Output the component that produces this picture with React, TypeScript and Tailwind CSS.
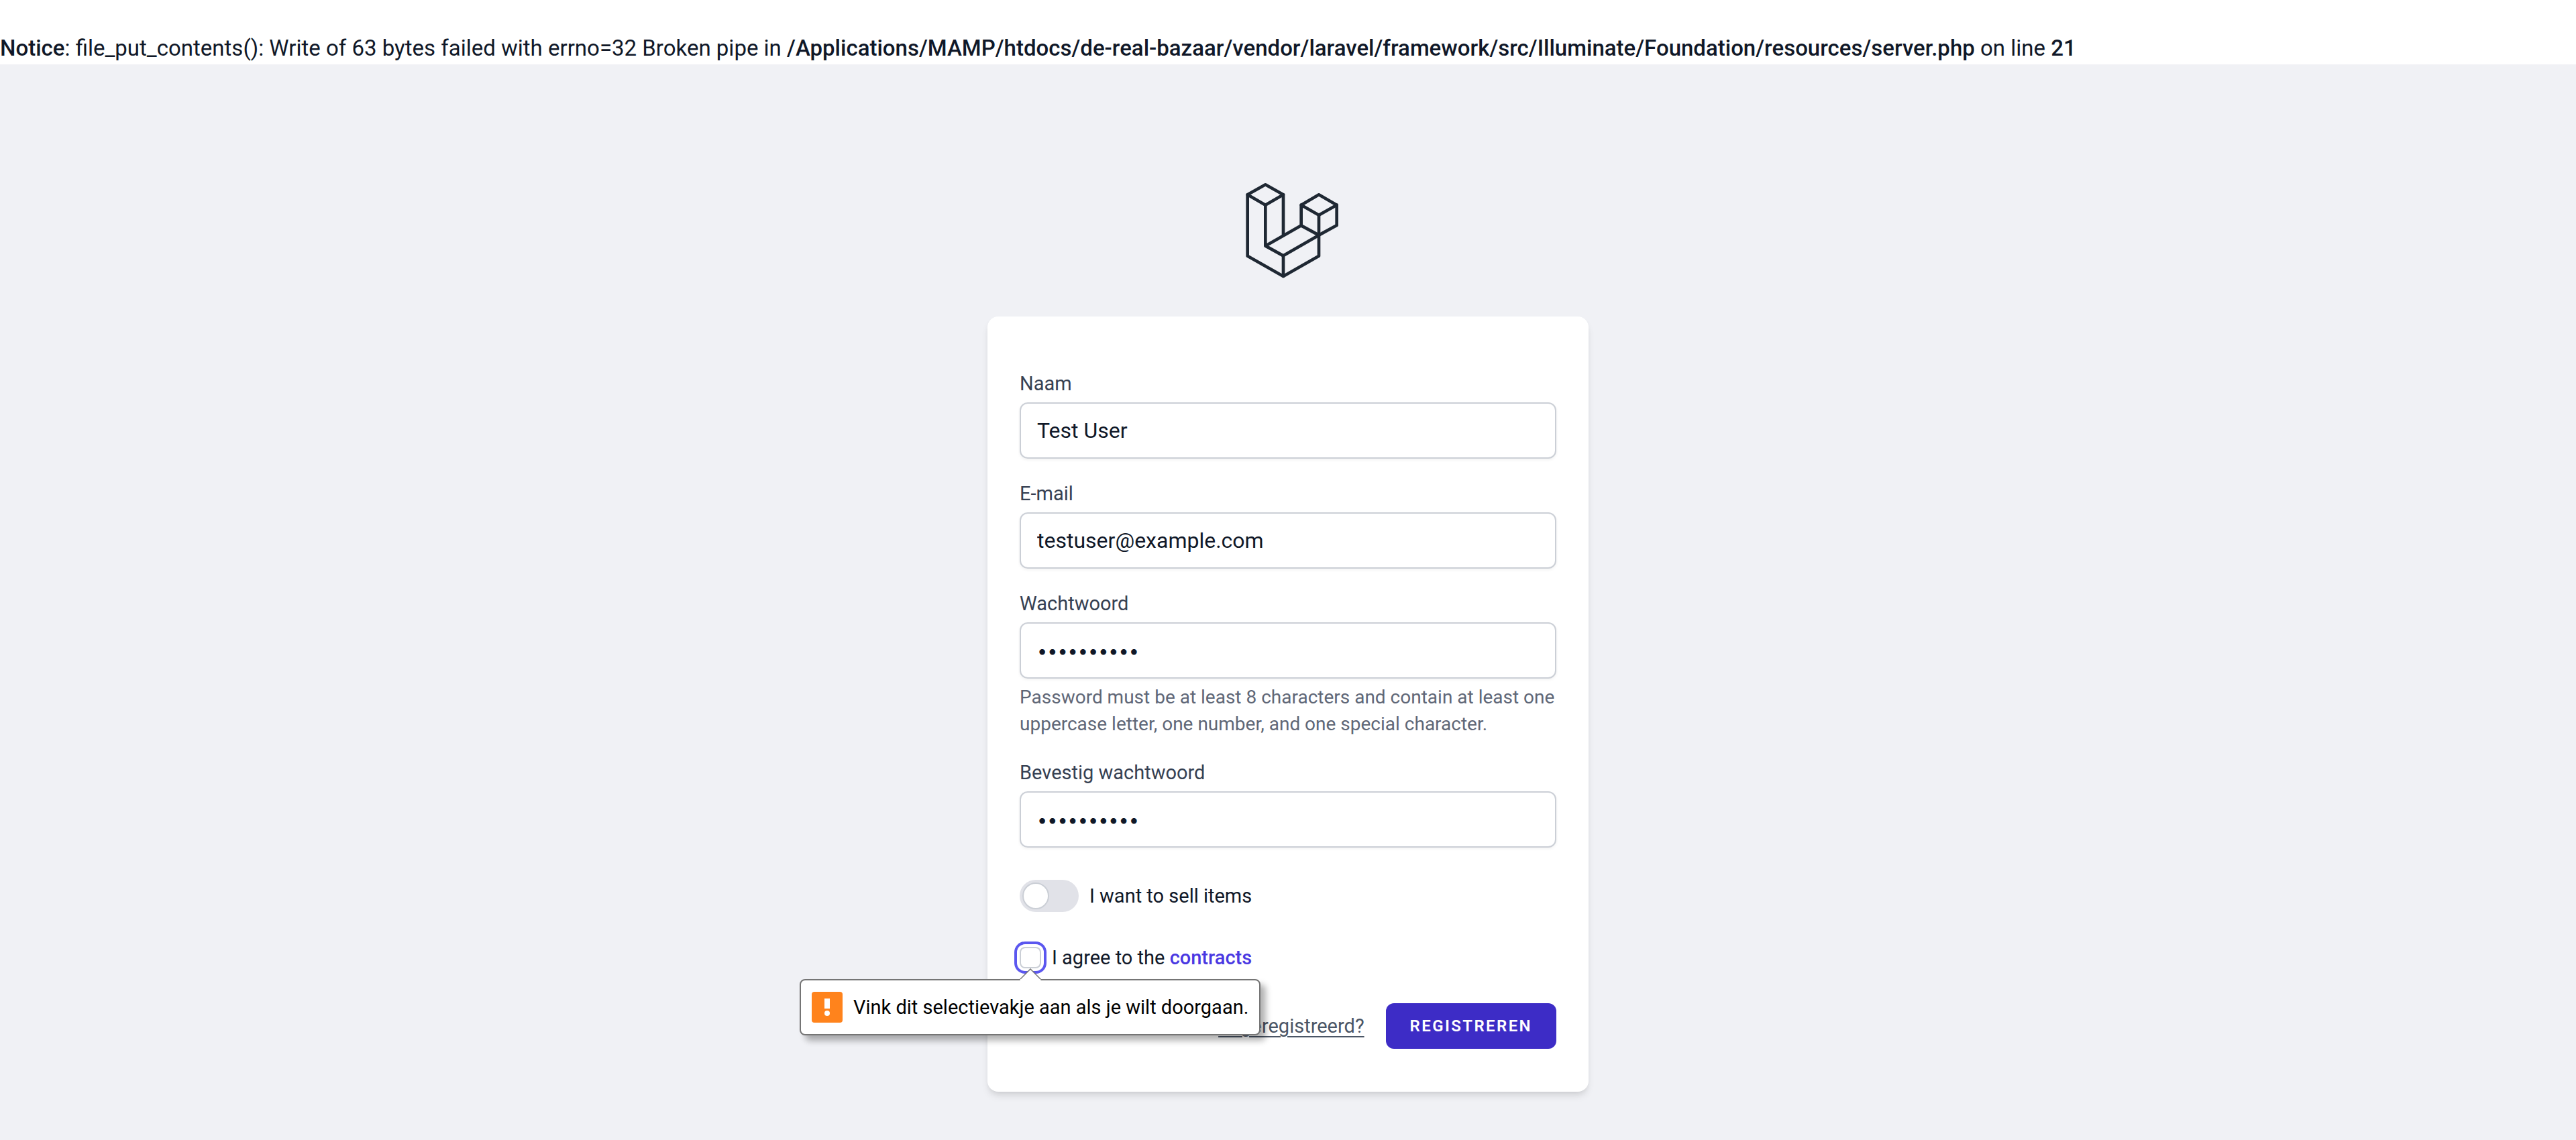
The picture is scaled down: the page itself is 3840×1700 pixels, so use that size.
import React, { useState } from "react";

function Logo() {
  return (
    <svg
      viewBox="60 42 480 480"
      className="size-40"
      fill="none"
      stroke="#1f2833"
      strokeWidth="14"
      strokeLinejoin="round"
      strokeLinecap="round"
      role="img"
      aria-label="Laravel"
    >
      <path d="M199 76 279 121 199 167 119 121Z" />
      <path d="M119 121V395L279 486L438 395V212" />
      <path d="M199 167V350L279 394L438 302L359 259L199 350" />
      <path d="M279 394V486" />
      <path d="M279 121V302" />
      <path d="M438 121 518 167 438 212 359 167Z" />
      <path d="M359 167V259" />
      <path d="M518 167V258L438 302" />
    </svg>
  );
}

type FieldProps = {
  id: string;
  label: string;
  type: string;
  initial: string;
  hint?: string;
};

function Field({ id, label, type, initial, hint }: FieldProps) {
  const [value, setValue] = useState(initial);
  const font =
    type === "password"
      ? "font-['Inter',sans-serif] text-[27px]"
      : "font-['Roboto',sans-serif] text-[32px]";
  return (
    <div>
      <label
        htmlFor={id}
        className="block text-[29px] leading-10 text-[#364153]"
      >
        {label}
      </label>
      <input
        id={id}
        type={type}
        value={value}
        onChange={(e) => setValue(e.target.value)}
        aria-describedby={hint ? `${id}-hint` : undefined}
        className={`mt-2 block h-21 w-full rounded-xl border-2 border-[#cbcfd6] bg-white px-6 leading-12 text-[#101828] shadow-[0_2px_4px_rgba(0,0,0,0.05)] outline-none ${font}`}
      />
      {hint && (
        <p
          id={`${id}-hint`}
          className="mt-2 text-[28px] leading-10 text-[#5f6777]"
        >
          {hint}
        </p>
      )}
    </div>
  );
}

function ValidationBubble() {
  return (
    <div
      role="alert"
      className="absolute top-13 -left-82 z-10 flex h-21 items-center gap-4 rounded-lg border-2 border-[#757575] bg-white px-4 whitespace-nowrap shadow-[8px_8px_10px_rgba(0,0,0,0.3)]"
    >
      <svg
        viewBox="0 0 32 18"
        className="absolute -top-[18px] left-[326px] h-[18px] w-8"
      >
        <path d="M0 18 16 1 32 18Z" fill="#fff" />
        <path d="M0 17 16 1 32 17" fill="none" stroke="#757575" strokeWidth="1.5" />
      </svg>
      <span className="absolute top-[-2px] left-[327px] h-[2px] w-[30px] bg-white" />
      <svg viewBox="0 0 46 46" className="size-[46px]" aria-hidden="true">
        <rect width="46" height="46" rx="4" fill="#ff831c" />
        <rect x="19" y="10" width="8" height="15" fill="#fff" />
        <circle cx="23" cy="32" r="4" fill="#fff" />
      </svg>
      <span className="text-[29px] leading-10 text-black">
        Vink dit selectievakje aan als je wilt doorgaan.
      </span>
    </div>
  );
}

export default function App() {
  const [seller, setSeller] = useState(false);
  const [agreed, setAgreed] = useState(false);

  return (
    <div className="flex min-h-screen flex-col bg-white font-['Roboto',sans-serif] text-[#101828] antialiased">
      <p className="pt-12 text-[33px] leading-12">
        <b className="font-medium">Notice</b>: file_put_contents(): Write of 63
        bytes failed with errno=32 Broken pipe in{" "}
        <b className="font-medium">
          /Applications/MAMP/htdocs/de-real-bazaar/vendor/laravel/framework/src/Illuminate/Foundation/resources/server.php
        </b>{" "}
        on line <b className="font-medium">21</b>
      </p>

      <main className="flex flex-1 flex-col items-center bg-[#f0f1f5] pt-42 pb-18">
        <a href="#" aria-label="Home">
          <Logo />
        </a>

        <form
          onSubmit={(e) => e.preventDefault()}
          className="mt-12 w-full max-w-4xl rounded-2xl bg-white px-12 pt-20 pb-16 shadow-[0_8px_12px_-2px_rgba(0,0,0,0.1),0_4px_8px_-4px_rgba(0,0,0,0.1)]"
        >
          <div className="flex flex-col gap-8">
            <Field id="name" label="Naam" type="text" initial="Test User" />
            <Field
              id="email"
              label="E-mail"
              type="email"
              initial="testuser@example.com"
            />
            <Field
              id="password"
              label="Wachtwoord"
              type="password"
              initial="Welkom123!"
              hint="Password must be at least 8 characters and contain at least one uppercase letter, one number, and one special character."
            />
            <Field
              id="password_confirmation"
              label="Bevestig wachtwoord"
              type="password"
              initial="Welkom123!"
            />
          </div>

          <label className="mt-12 flex h-12 w-fit items-center gap-4 text-[29px] leading-10">
            <input
              type="checkbox"
              role="switch"
              checked={seller}
              onChange={(e) => setSeller(e.target.checked)}
              className="h-12 w-22 appearance-none rounded-full bg-[#e1e2e8] p-1 before:block before:size-10 before:rounded-full before:border-2 before:border-[#cbcfd6] before:bg-white checked:bg-[#4f39f6] checked:before:translate-x-10"
            />
            I want to sell items
          </label>

          <div className="relative mt-12 flex h-10 items-center gap-4">
            <input
              id="terms"
              type="checkbox"
              checked={agreed}
              onChange={(e) => setAgreed(e.target.checked)}
              className="size-8 appearance-none rounded-lg border-2 border-[#cbcfd6] bg-white ring-4 ring-[#5b57ef] ring-offset-4 checked:bg-[#4f39f6]"
            />
            <label htmlFor="terms" className="text-[29px] leading-10">
              I agree to the{" "}
              <a href="#" className="font-medium text-[#4a38e2]">
                contracts
              </a>
            </label>
            <ValidationBubble />
          </div>

          <div className="mt-12 flex items-center justify-end gap-8">
            <a
              href="#"
              className="text-[29px] leading-10 text-[#4a5565] underline decoration-2 underline-offset-5"
            >
              Al geregistreerd?
            </a>
            <button
              type="submit"
              className="h-17 rounded-xl bg-[#3d2cc6] px-9 text-2xl font-semibold tracking-widest text-white uppercase"
            >
              Registreren
            </button>
          </div>
        </form>
      </main>
    </div>
  );
}
